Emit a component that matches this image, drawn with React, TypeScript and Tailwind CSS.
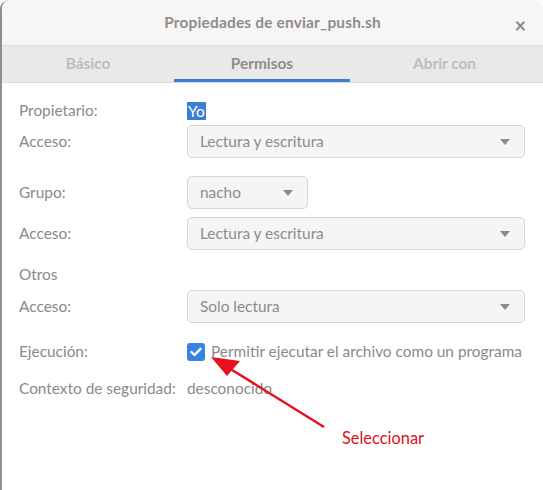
import React from "react";

function ComboArrow() {
  return (
    <svg width="10" height="6" viewBox="0 0 10 6" className="shrink-0">
      <path d="M0 0 L10 0 L5 6 Z" fill="#8a8a8a" />
    </svg>
  );
}

function Combo({ value, wide = true }: { value: string; wide?: boolean }) {
  return (
    <div
      className={`${wide ? "w-[338px]" : "w-[121px]"} h-[33px] flex items-center justify-between pl-[12px] pr-[14px] rounded-[5px] border border-[#d6d6d5] bg-[#f5f5f4] text-[#8c8c8c]`}
    >
      <span>{value}</span>
      <ComboArrow />
    </div>
  );
}

function Row({
  label,
  className,
  children,
}: {
  label: string;
  className: string;
  children?: React.ReactNode;
}) {
  return (
    <div className={`flex items-center ${className}`}>
      <div className="w-[168px] shrink-0">{label}</div>
      {children}
    </div>
  );
}

export default function App() {
  return (
    <div className="relative w-[543px] h-[490px] bg-white overflow-hidden font-['Lato','Liberation_Sans',sans-serif] text-[15.4px] text-[#8a8a8a]">
      <div className="h-full rounded-t-[9px] border-l-2 border-[#8e8e8e] bg-white">
        {/* title bar */}
        <div className="relative h-[46px] flex items-center justify-center bg-[#f7f6f5] border-b border-[#dedddc] rounded-t-[9px]">
          <span className="font-bold text-[15.4px] text-[#8d8d8d] tracking-[0.2px]">
            Propiedades de enviar_push.sh
          </span>
          <span className="absolute right-[17px] top-[10px] text-[20px] font-bold text-[#8a8a8a]">
            ×
          </span>
        </div>

        {/* tabs */}
        <div className="h-[37px] flex bg-[#e9e9e8] border-b border-[#dcdcdb] font-bold">
          <div className="w-[172px] flex items-center justify-center text-[#bdbdbd]">
            Básico
          </div>
          <div className="w-[176px] flex items-center justify-center text-[#8d8d8d] border-b-[3px] border-[#3a7fd5] pt-[3px]">
            Permisos
          </div>
          <div className="flex-1 flex items-center justify-center text-[#bdbdbd] pr-[4px]">
            Abrir con
          </div>
        </div>

        {/* content */}
        <div className="flex flex-col pl-[17px]">
          <Row label="Propietario:" className="mt-[18px] h-[20px]">
            <span className="bg-[#3a7fd5] text-white px-[1px] leading-[18px]">Yo</span>
          </Row>
          <Row label="Acceso:" className="mt-[4px] h-[33px]">
            <Combo value="Lectura y escritura" />
          </Row>
          <Row label="Grupo:" className="mt-[18px] h-[33px]">
            <Combo value="nacho" wide={false} />
          </Row>
          <Row label="Acceso:" className="mt-[8px] h-[33px]">
            <Combo value="Lectura y escritura" />
          </Row>
          <Row label="Otros" className="mt-[15px] h-[20px]" />
          <Row label="Acceso:" className="mt-[5px] h-[33px]">
            <Combo value="Solo lectura" />
          </Row>
          <Row label="Ejecución:" className="mt-[19px] h-[20px]">
            <div className="w-[18px] h-[18px] rounded-[3px] bg-[#3584e4] flex items-center justify-center mr-[6px]">
              <svg width="12" height="10" viewBox="0 0 12 10">
                <path
                  d="M1.5 5 L4.5 8 L10.5 1.8"
                  fill="none"
                  stroke="white"
                  strokeWidth="2.4"
                  strokeLinecap="round"
                  strokeLinejoin="round"
                />
              </svg>
            </div>
            <span>Permitir ejecutar el archivo como un programa</span>
          </Row>
          <Row label="Contexto de seguridad:" className="mt-[17px] h-[20px]">
            <span>desconocido</span>
          </Row>
        </div>
      </div>

      {/* annotation */}
      <svg
        className="absolute left-0 top-0 pointer-events-none"
        width="543"
        height="490"
        viewBox="0 0 543 490"
      >
        <line x1="324" y1="427" x2="224" y2="365" stroke="#e8101a" strokeWidth="2.5" />
        <polygon points="211,357 240,361 227,376" fill="#e8101a" />
      </svg>
      <span className="absolute left-[342px] top-[426px] text-[16.4px] text-[#e0101a]">
        Seleccionar
      </span>
    </div>
  );
}
